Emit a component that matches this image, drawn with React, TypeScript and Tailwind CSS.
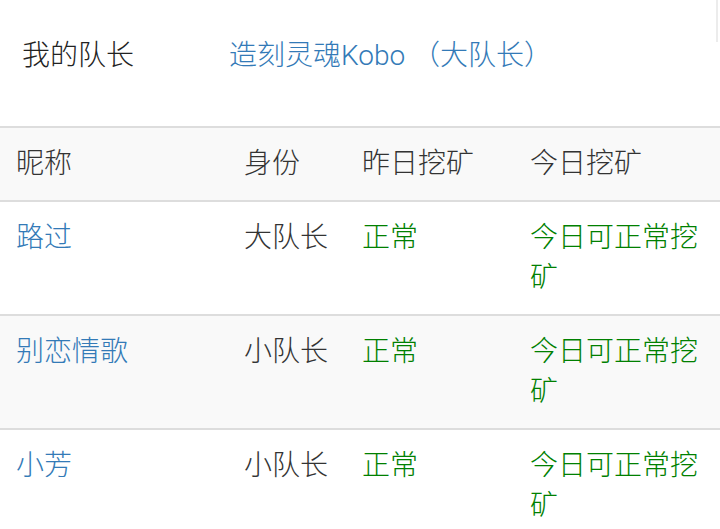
import React from "react";

const rows = [
  { name: "路过", role: "大队长", y: "正常", t: "今日可正常挖矿", striped: false },
  { name: "别恋情歌", role: "小队长", y: "正常", t: "今日可正常挖矿", striped: true },
  { name: "小芳", role: "小队长", y: "正常", t: "今日可正常挖矿", striped: false },
];

export default function App() {
  return (
    <div
      className="relative w-[720px] h-[529px] overflow-hidden bg-white text-[28px] leading-[40px] font-light text-[#333]"
      style={{ fontFamily: 'Roboto, "Noto Sans CJK SC", sans-serif' }}
    >
      <div className="absolute right-[2px] top-0 h-[42px] w-[2px] bg-[#ececec]" />
      <div className="flex h-[126px] items-start pt-[36px]">
        <div className="w-[229px] pl-[22px] text-[#222]">我的队长</div>
        <div className="text-[#337ab7]">造刻灵魂Kobo （大队长）</div>
      </div>
      <table className="w-[720px] table-fixed border-collapse">
        <colgroup>
          <col className="w-[228px]" />
          <col className="w-[118px]" />
          <col className="w-[168px]" />
          <col className="w-[206px]" />
        </colgroup>
        <thead>
          <tr className="bg-[#f9f9f9] border-t-2 border-b-2 border-[#ddd]">
            <th className="px-[16px] py-[16px] text-left font-light align-top">昵称</th>
            <th className="px-[16px] py-[16px] text-left font-light align-top">身份</th>
            <th className="px-[16px] py-[16px] text-left font-light align-top">昨日挖矿</th>
            <th className="px-[16px] py-[16px] text-left font-light align-top">今日挖矿</th>
          </tr>
        </thead>
        <tbody>
          {rows.map((r, i) => (
            <tr
              key={i}
              className={(r.striped ? "bg-[#f9f9f9] " : "bg-white ") + "border-b-2 border-[#ddd]"}
            >
              <td className="px-[16px] py-[16px] align-top text-[#337ab7]">{r.name}</td>
              <td className="px-[16px] py-[16px] align-top">{r.role}</td>
              <td className="px-[16px] py-[16px] align-top text-[#008000]">{r.y}</td>
              <td className="px-[16px] py-[16px] align-top text-[#008000]">{r.t}</td>
            </tr>
          ))}
        </tbody>
      </table>
    </div>
  );
}
